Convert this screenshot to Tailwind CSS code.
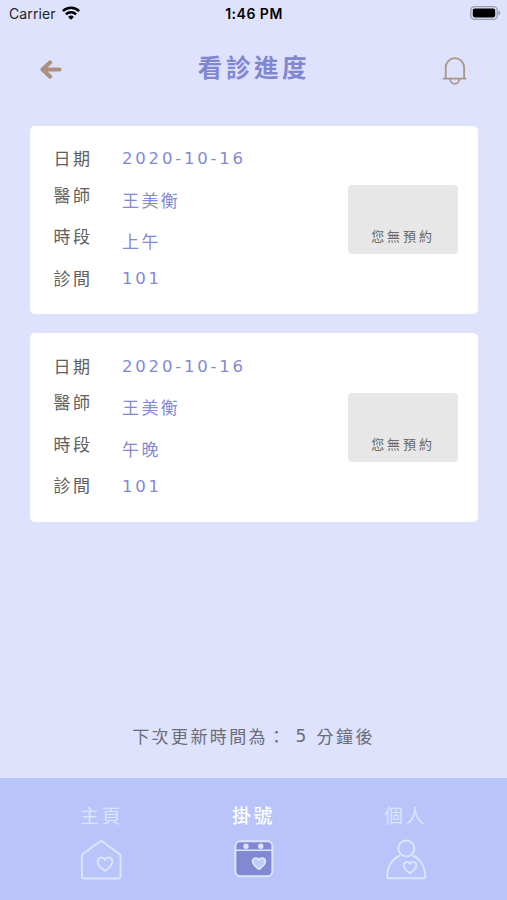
<!DOCTYPE html>
<html lang="zh-Hant">
<head>
<meta charset="utf-8">
<title>看診進度</title>
<script src="https://cdn.jsdelivr.net/npm/@tailwindcss/browser@4"></script>
</head>
<body class="flex h-[900px] w-[507px] flex-col overflow-hidden bg-[#dee2fd] font-['Noto_Sans_CJK_TC',sans-serif]">
  <div class="grid h-7 shrink-0 grid-cols-[1fr_80px_1fr] items-center pr-[6px] pl-[9px] font-['Inter',sans-serif] text-black">
    <div class="flex items-center gap-[6px]">
      <span class="text-[14px] leading-7 tracking-[0.1px] text-[#22232b]">Carrier</span>
      <svg class="-mt-[2px] h-[14px] w-[18px]" viewBox="0 0 18 14" fill="none" stroke="currentColor" stroke-width="2.5"><path d="M.9 5.2a11.5 11.5 0 0 1 16.2 0M3.9 8.4a7.2 7.2 0 0 1 10.2 0"/><path d="M9 13.8 6.1 10.9a4.1 4.1 0 0 1 5.8 0Z" fill="currentColor" stroke="none"/></svg>
    </div>
    <span class="-mt-[2px] -ml-[2px] text-center text-[14px] font-semibold tracking-[0.5px] whitespace-nowrap">1:46 PM</span>
    <svg class="-mt-[2px] h-[14px] w-[31px] justify-self-end" viewBox="0 0 31 14"><rect x=".8" y=".7" width="26.4" height="12.6" rx="3.6" fill="none" stroke="#9b9dad" stroke-width="1.3"/><rect x="2.8" y="2.6" width="22.4" height="8.8" rx="1.8"/><path d="M28.4 4.6c2.6 1 2.6 3.8 0 4.8Z" fill="#9b9dad"/></svg>
  </div>

  <header class="flex h-[97.5px] shrink-0 items-start justify-between pt-[17px] pr-[39px] pl-[39px]">
    <svg class="mt-[14.5px] h-[19px] w-[23px]" viewBox="0 0 23 19" fill="none" stroke="#ad917f" stroke-width="4.2" stroke-linecap="round" stroke-linejoin="round"><path d="M11 2.5 3.5 9.5l7.5 7M4.5 9.5h16"/></svg>
    <h1 class="pl-[4px] text-[24.5px] leading-[43px] font-bold tracking-[3.6px] text-[#8087cf]">看診進度</h1>
    <svg class="mt-[11px] h-[30px] w-[26px]" viewBox="0 0 26 30" fill="none" stroke="#ad9686" stroke-width="1.8" stroke-linecap="round"><path d="M1.4 22.6h22.2M3.7 22.4V11.3a9.2 9.2 0 0 1 18.4 0v11.1M8.2 23a4.5 4.8 0 0 0 9 0"/></svg>
  </header>

  <main class="flex flex-col gap-[19px] pr-[29px] pl-[30px]">
    <section class="flex h-[188.5px] rounded-[5px] bg-white pt-[20.5px] pr-[20px] pl-[23.5px] text-[17px] leading-6 tracking-[2.4px]">
      <div class="w-[68.5px] text-[#606060]">
        <p>日期</p><p class="mt-[12.5px]">醫師</p><p class="mt-[17.5px]">時段</p><p class="mt-[17.5px]">診間</p>
      </div>
      <div class="flex-1 text-[#8489d3]">
        <p class="pt-px font-['DejaVu_Sans',sans-serif] text-[16.5px] tracking-[2.8px]">2020-10-16</p><p class="mt-[16.5px]">王美衡</p><p class="mt-[17.5px]">上午</p><p class="mt-[14px] font-['DejaVu_Sans',sans-serif] text-[16.5px] tracking-[2.8px]">101</p>
      </div>
      <div class="mt-[39px] flex h-[69px] w-[110px] items-end justify-center rounded-[4px] bg-[#e7e7e7] pb-[6px] text-[13px] tracking-[2.9px] text-[#686868]">您無預約</div>
    </section>
    <section class="flex h-[188.5px] rounded-[5px] bg-white pt-[20.5px] pr-[20px] pl-[23.5px] text-[17px] leading-6 tracking-[2.4px]">
      <div class="w-[68.5px] text-[#606060]">
        <p>日期</p><p class="mt-[12.5px]">醫師</p><p class="mt-[17.5px]">時段</p><p class="mt-[17.5px]">診間</p>
      </div>
      <div class="flex-1 text-[#8489d3]">
        <p class="pt-px font-['DejaVu_Sans',sans-serif] text-[16.5px] tracking-[2.8px]">2020-10-16</p><p class="mt-[16.5px]">王美衡</p><p class="mt-[17.5px]">午晚</p><p class="mt-[14px] font-['DejaVu_Sans',sans-serif] text-[16.5px] tracking-[2.8px]">101</p>
      </div>
      <div class="mt-[39px] flex h-[69px] w-[110px] items-end justify-center rounded-[4px] bg-[#e7e7e7] pb-[6px] text-[13px] tracking-[2.9px] text-[#686868]">您無預約</div>
    </section>
  </main>

  <p class="mt-auto mb-[30px] flex justify-center text-[17px] leading-6 tracking-[2.4px] text-[#6b6c78]"><span>下次更新時間為：</span><span class="mr-[8px] ml-[8px] font-['DejaVu_Sans',sans-serif]">5</span><span>分鐘後</span></p>

  <nav class="grid h-[122px] shrink-0 grid-cols-[152px_152px_152px] justify-center bg-[#b9c4fa] pt-[23px] text-[19px] leading-[28px] tracking-[2.5px] text-[#dde4ff]">
    <a class="flex flex-col items-center">
      <span>主頁</span>
      <svg class="mt-[9px] h-[44px] w-[44px]" viewBox="1 0 44 44" fill="none" stroke="currentColor" stroke-width="2" stroke-linejoin="round"><path d="M21 3.4q1-.7 2 0L40.6 16q1 .8 1 2v20q0 2.500-2.500 2.500H5.400q-2.500 0-2.500-2.500V18q0-1.200 1-2Z"/><path d="M26 32.800c-3-2-7.400-5-7.400-9 0-4.700 5.400-5.700 7.400-2 2-3.700 7.400-2.700 7.400 2 0 4-4.400 7-7.400 9Z"/></svg>
    </a>
    <a class="flex flex-col items-center">
      <span class="font-medium text-white">掛號</span>
      <svg class="mt-[9px] h-[44px] w-[44px]" viewBox="0 0 44 44"><rect x="3.4" y="3.2" width="37" height="35" rx="5" fill="#8189d3" stroke="#dde4ff" stroke-width="2"/><path d="M3.4 12.3h37" stroke="#dde4ff" stroke-width="1.6"/><circle cx="14" cy="8.2" r="2.7" fill="#dde4ff"/><circle cx="28.8" cy="8.2" r="2.7" fill="#dde4ff"/><path d="M27 31.2c-3-2-6.400-4.300-6.400-7.600 0-3.900 4.800-4.700 6.400-1.700 1.600-3 6.400-2.200 6.400 1.700 0 3.300-3.400 5.600-6.400 7.600Z" fill="#c3cdfb" stroke="#dde4ff" stroke-width="1.7"/></svg>
    </a>
    <a class="flex flex-col items-center">
      <span>個人</span>
      <svg class="mt-[9px] h-[44px] w-[44px]" viewBox="0 0 44 44" fill="none" stroke="currentColor" stroke-width="2" stroke-linejoin="round"><circle cx="22.3" cy="10.5" r="8"/><path d="M16 17.500C8 21 3 29 3.100 39q0 1.200 1.200 1.200h35.700q1.200 0 1.200-1.200C41.300 29 36.600 21 28.600 17.500"/><path d="M26 35.300c-3-2-6.200-4.500-6.200-7.700 0-4 4.600-4.800 6.200-1.700 1.600-3.100 6.200-2.300 6.200 1.700 0 3.200-3.200 5.700-6.200 7.700Z"/></svg>
    </a>
  </nav>
</body>
</html>
